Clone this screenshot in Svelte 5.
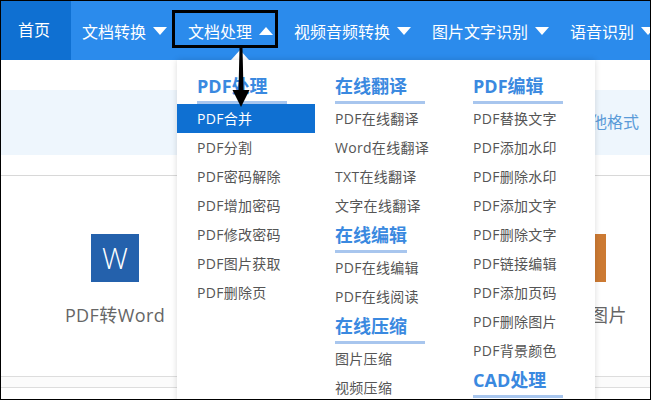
<script>
  const navItems = ['文档转换', '文档处理', '视频音频转换', '图片文字识别', '语音识别'];
  const columns = [
    [{ title: 'PDF处理', items: ['PDF合并', 'PDF分割', 'PDF密码解除', 'PDF增加密码', 'PDF修改密码', 'PDF图片获取', 'PDF删除页'] }],
    [
      { title: '在线翻译', items: ['PDF在线翻译', 'Word在线翻译', 'TXT在线翻译', '文字在线翻译'] },
      { title: '在线编辑', short: true, items: ['PDF在线编辑', 'PDF在线阅读'] },
      { title: '在线压缩', items: ['图片压缩', '视频压缩'] }
    ],
    [
      { title: 'PDF编辑', items: ['PDF替换文字', 'PDF添加水印', 'PDF删除水印', 'PDF添加文字', 'PDF删除文字', 'PDF链接编辑', 'PDF添加页码', 'PDF删除图片', 'PDF背景颜色'] },
      { title: 'CAD处理', items: [] }
    ]
  ];
</script>

<div class="page">
  <nav class="nav">
    <a class="home" href="#home">首页</a>
    {#each navItems as item}
      <div class="nav-item" class:open={item === '文档处理'}>
        <span>{item}</span>
        <i class="arrow"></i>
        {#if item === '文档处理'}
          <div class="callout"></div>
          <div class="caret"></div>
          <div class="menu">
            {#each columns as col}
              <div class="col">
                {#each col as group}
                  <div class="title" class:short={group.short}>{group.title}</div>
                  {#each group.items as link}
                    <div class="link" class:active={link === 'PDF合并'}>{link}</div>
                  {/each}
                {/each}
              </div>
            {/each}
          </div>
          <svg class="pointer" width="20" height="60" viewBox="0 0 20 60">
            <path d="M8.500 0h3l1 42h6L10 59 1.500 42h6z" fill="#000" />
          </svg>
        {/if}
      </div>
    {/each}
  </nav>

  <div class="band"><span>支持其他格式</span></div>

  <div class="cards">
    <div class="card">
      <div class="icon word">W</div>
      <div class="label">PDF转Word</div>
    </div>
    <div class="card last">
      <div class="icon img"></div>
      <div class="label">PDF转图片</div>
    </div>
  </div>
  <div class="rule"></div>
</div>

<style>
  :global(body) {
    margin: 0;
    font-family: "Open Sans", "Noto Sans CJK SC", sans-serif;
  }
  .page {
    width: 651px;
    height: 400px;
    box-sizing: border-box;
    border: 1px solid #000;
    overflow: hidden;
    background: #fff;
  }
  .nav {
    display: flex;
    height: 59px;
    background: #2b8bec;
    color: #fff;
    font-size: 16px;
  }
  .home {
    flex: none;
    box-sizing: border-box;
    width: 70px;
    padding-left: 17px;
    line-height: 58px;
    color: #fff;
    text-decoration: none;
    background: #0f70d2;
  }
  .nav-item {
    position: relative;
    flex: none;
    display: flex;
    align-items: center;
    gap: 7px;
    padding: 0 10px 0 11px;
    white-space: nowrap;
  }
  .arrow {
    width: 0;
    height: 0;
    border-left: 7px solid transparent;
    border-right: 7px solid transparent;
    border-top: 8px solid #fff;
  }
  .open .arrow {
    border-top: 0;
    border-bottom: 8px solid #fff;
  }
  .callout {
    position: absolute;
    left: -5px;
    top: 9px;
    width: 100px;
    height: 32px;
    border: 3px solid #000;
  }
  .caret {
    position: absolute;
    left: 54px;
    top: 49px;
    width: 0;
    height: 0;
    border-left: 9px solid transparent;
    border-right: 9px solid transparent;
    border-bottom: 10px solid #fff;
  }
  .menu {
    position: absolute;
    left: 0;
    top: 59px;
    z-index: 2;
    display: flex;
    width: 418px;
    height: 360px;
    box-sizing: border-box;
    padding-top: 11px;
    background: #fff;
    box-shadow: 0 0 6px rgba(0, 0, 0, 0.15);
    color: #555;
  }
  .col { width: 138px; }
  .title {
    box-sizing: border-box;
    width: 90px;
    height: 33px;
    margin-left: 20px;
    border-bottom: 3px solid #a8c6ee;
    color: #3a89e0;
    font-size: 18px;
    font-weight: 700;
    line-height: 30px;
  }
  .title.short { width: 72px; }
  .link {
    height: 29px;
    padding-left: 20px;
    font-size: 14px;
    line-height: 29px;
    letter-spacing: 0.3px;
  }
  .link.active {
    background: #0f70d2;
    color: #fff;
  }
  .pointer {
    position: absolute;
    left: 54px;
    top: 47px;
    z-index: 3;
  }
  .band {
    height: 65px;
    margin-top: 30px;
    padding-right: 11px;
    background: #eef6fd;
    color: #5a9bd8;
    font-size: 16px;
    line-height: 65px;
    text-align: right;
  }
  .cards {
    display: grid;
    grid-template-columns: repeat(3, 233.5px);
    height: 201px;
    margin-top: 20px;
    margin-left: -2.750px;
    padding-top: 58px;
    box-sizing: border-box;
    border-top: 1px solid #d8d8d8;
  }
  .card {
    display: flex;
    flex-direction: column;
    align-items: center;
  }
  .card.last { grid-column: 3; }
  .icon {
    width: 48px;
    height: 48px;
    color: #fff;
    font-size: 29px;
    font-weight: 300;
    line-height: 48px;
    text-align: center;
  }
  .word { background: #2461ac; }
  .img { background: #cc7a33; }
  .label {
    margin-top: 20px;
    color: #666;
    font-size: 18px;
    line-height: 26px;
    letter-spacing: 0.4px;
  }
  .rule {
    height: 10px;
    border-top: 1px solid #ddd;
    border-bottom: 1px solid #ddd;
    background: #fbfbfb;
  }
</style>
